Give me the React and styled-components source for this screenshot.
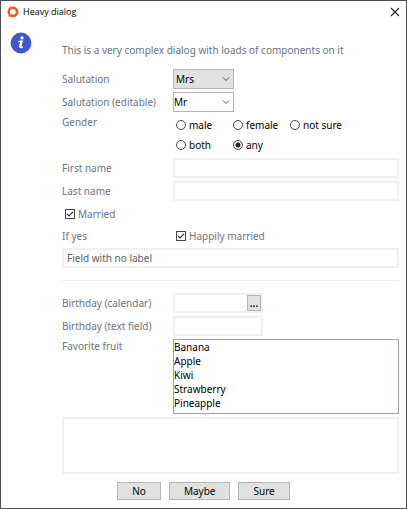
import React from "react";
import styled, { createGlobalStyle } from "styled-components";

const GlobalStyle = createGlobalStyle`
  * { box-sizing: border-box; }
  body { margin: 0; background: #fff; }
  body, input, button, select, textarea {
    font-family: "Noto Sans", "Open Sans", sans-serif;
    font-size: 10px;
    line-height: 14px;
  }
`;

const Dialog = styled.main`
  display: flex;
  flex-direction: column;
  min-height: 100vh;
  border: 1px solid #505052;
  background: #fff;
  color: #000;
`;

const TitleBar = styled.header`
  display: flex;
  align-items: center;
  height: 22px;
  padding: 0 6px;
`;

const Title = styled.h1`
  flex: 1;
  margin: 0 0 0 4px;
  font-family: "Open Sans", sans-serif;
  font-size: 9px;
  font-weight: 400;
  color: #000;
`;

const CloseButton = styled.button`
  display: flex;
  padding: 0;
  border: 0;
  background: none;
`;

const Body = styled.div`
  display: grid;
  grid-template-columns: 52px 1fr;
  padding: 9px 7px 0 9px;
`;

const Form = styled.form`
  display: flex;
  flex-direction: column;
  gap: 3px;
`;

const Intro = styled.p`
  margin: 7px 0 5px;
  line-height: 22px;
  color: #6c7482;
`;

const Row = styled.div`
  display: grid;
  grid-template-columns: 111px 1fr;
  align-items: ${(p) => (p.$top ? "start" : "center")};
  min-height: ${(p) => (p.$short ? 19 : 20)}px;
`;

const Label = styled.label`
  color: #6c7482;
`;

const inputBox = `
  width: 100%;
  height: 20px;
  padding: 0 3px;
  border: 2px solid #f0f0f0;
  border-radius: 0;
  outline: none;
  background: #fff;
  color: #606060;
`;

const TextInput = styled.input`
  ${inputBox}
  max-width: ${(p) => (p.$narrow ? "90px" : "none")};
`;

const ComboWrap = styled.div`
  display: flex;
  align-items: center;
  width: 61px;
  height: 20px;
  border: 1px solid #b4b4bb;
  background: ${(p) => (p.$filled ? "#e1e1e1" : "#fff")};
`;

const Select = styled.select`
  appearance: none;
  width: 100%;
  height: 18px;
  padding: 0 2px;
  border: 0;
  outline: none;
  background: transparent;
  color: #000;
`;

const ComboInput = styled.input`
  flex: 1;
  min-width: 0;
  height: 18px;
  padding: 0;
  border: 0;
  outline: none;
  background: transparent;
  color: #000;
`;

const ArrowButton = styled.button`
  display: flex;
  padding: 0 3px 0 0;
  border: 0;
  background: none;
`;

const Arrow = styled.span`
  display: flex;
  padding-right: 3px;
  pointer-events: none;
`;

const RadioGroup = styled.div`
  display: grid;
  grid-template-columns: 57px 57px 1fr;
  grid-auto-rows: 20px;
  align-items: center;
  padding-left: 3px;
`;

const Choice = styled.label`
  display: flex;
  align-items: center;
  gap: 3px;
  padding-left: ${(p) => (p.$indent ? 3 : 0)}px;
  color: ${(p) => (p.$muted ? "#6c7482" : "#000")};
  white-space: nowrap;
`;

const Radio = styled.input`
  appearance: none;
  width: 10px;
  height: 10px;
  margin: 0;
  border: 1px solid #444;
  border-radius: 50%;
  background: #fff;
  &:checked { background: radial-gradient(circle, #222 0 2px, #fff 3px); }
`;

const CheckFrame = styled.span`
  display: grid;
  width: 10px;
  height: 10px;
  > * { grid-area: 1 / 1; }
  svg { display: none; pointer-events: none; z-index: 1; }
  input:checked + svg { display: block; }
`;

const CheckInput = styled.input`
  appearance: none;
  width: 10px;
  height: 10px;
  margin: 0;
  border: 1px solid #444;
  background: #fff;
`;

const Divider = styled.hr`
  width: 100%;
  height: 1px;
  margin: 9px 0;
  border: 0;
  background: #ededed;
`;

const DateField = styled.div`
  display: flex;
  width: 90px;
  height: 20px;
  border: 2px solid #f0f0f0;
`;

const DateInput = styled.input`
  flex: 1;
  min-width: 0;
  padding: 0 3px;
  border: 0;
  outline: none;
`;

const DateButton = styled.button`
  width: 14px;
  padding: 0;
  border: 1px solid #b5b5b5;
  background: #e1e1e1;
  color: #000;
  font-weight: 600;
  line-height: 12px;
`;

const ListBox = styled.select`
  width: 100%;
  height: 75px;
  padding: 0;
  border: 1px solid #9fa1a9;
  border-radius: 0;
  outline: none;
  overflow: hidden;
  background: #fff;
  color: #000;
`;

const ListOption = styled.option`
  height: 14px;
  min-height: 14px;
  padding: 0;
  line-height: 14px;
`;

const Notes = styled.textarea`
  ${inputBox}
  display: block;
  height: 57px;
  resize: none;
`;

const Footer = styled.footer`
  display: flex;
  justify-content: center;
  gap: 8px;
  padding: 8px 0;
`;

const ActionButton = styled.button`
  height: 18px;
  padding: 0 14px;
  border: 1px solid #b5b5b8;
  background: #e1e1e1;
  color: #000;
`;

const Chevron = () => (
  <svg width="8" height="6" viewBox="0 0 8 6" fill="none" stroke="#555" strokeWidth="1">
    <path d="M1 1.5 4 4.5 7 1.5" />
  </svg>
);

const AppLogo = () => (
  <svg width="12" height="12" viewBox="0 0 12 12" fill="none" stroke="#f2561d" strokeWidth="2.5">
    <path d="M4.3 2A4.2 4.2 0 0 1 10.1 6M9.8 7.4A4.2 4.2 0 0 1 3.6 9.4M2.6 8.4A4.2 4.2 0 0 1 3.4 2.6" />
    <path d="M3 .8 4.6 3M11.6 7.2 9 6.8M1.7 10.4 3.9 8.6" strokeWidth="1.4" />
  </svg>
);

const InfoIcon = () => (
  <svg width="22" height="22" viewBox="0 0 22 22" role="img" aria-label="Information">
    <circle cx="11" cy="11" r="10.4" fill="#3f58cb" />
    <circle cx="12" cy="5.9" r="1.6" fill="#fff" />
    <path d="M8.3 9.6 12.2 9 10.5 15.2Q10.7 16.2 12.8 14.6" fill="none" stroke="#fff" strokeWidth="1.2" />
    <path d="M11.4 9.1 9.8 15.6" stroke="#fff" strokeWidth="2" />
  </svg>
);

const Checkbox = ({ children }) => (
  <Choice $muted $indent>
    <CheckFrame>
      <CheckInput type="checkbox" defaultChecked />
      <svg width="10" height="10" viewBox="0 0 10 10" fill="none" stroke="#333" strokeWidth="1.2">
        <path d="M2 5 4 7 8 2.8" />
      </svg>
    </CheckFrame>
    {children}
  </Choice>
);

const genders = ["male", "female", "not sure", "both", "any"];
const fruits = ["Banana", "Apple", "Kiwi", "Strawberry", "Pineapple"];

export default function App() {
  return (
    <>
      <GlobalStyle />
      <Dialog>
        <TitleBar>
          <AppLogo />
          <Title>Heavy dialog</Title>
          <CloseButton aria-label="Close">
            <svg width="10" height="10" viewBox="0 0 10 10" stroke="#222" strokeWidth="1.1">
              <path d="M1 1 9 9M9 1 1 9" />
            </svg>
          </CloseButton>
        </TitleBar>
        <Body>
          <InfoIcon />
          <Form onSubmit={(e) => e.preventDefault()}>
            <Intro>This is a very complex dialog with loads of components on it</Intro>
            <Row>
              <Label htmlFor="salutation">Salutation</Label>
              <ComboWrap $filled>
                <Select id="salutation" defaultValue="Mrs">
                  <option>Mr</option>
                  <option>Mrs</option>
                </Select>
                <Arrow><Chevron /></Arrow>
              </ComboWrap>
            </Row>
            <Row>
              <Label htmlFor="salutation-editable">Salutation (editable)</Label>
              <ComboWrap>
                <ComboInput id="salutation-editable" defaultValue="Mr" />
                <ArrowButton type="button" aria-label="Show salutations"><Chevron /></ArrowButton>
              </ComboWrap>
            </Row>
            <Row $top>
              <Label as="span" id="gender">Gender</Label>
              <RadioGroup role="radiogroup" aria-labelledby="gender">
                {genders.map((g) => (
                  <Choice key={g}>
                    <Radio type="radio" name="gender" value={g} defaultChecked={g === "any"} />
                    {g}
                  </Choice>
                ))}
              </RadioGroup>
            </Row>
            <Row>
              <Label htmlFor="first">First name</Label>
              <TextInput id="first" />
            </Row>
            <Row>
              <Label htmlFor="last">Last name</Label>
              <TextInput id="last" />
            </Row>
            <Row $short>
              <Checkbox>Married</Checkbox>
            </Row>
            <Row $short>
              <Label as="span">If yes</Label>
              <Checkbox>Happily married</Checkbox>
            </Row>
            <TextInput aria-label="Field with no label" defaultValue="Field with no label" />
            <Divider />
            <Row>
              <Label htmlFor="birthday-calendar">Birthday (calendar)</Label>
              <DateField>
                <DateInput id="birthday-calendar" />
                <DateButton type="button" aria-label="Open calendar">...</DateButton>
              </DateField>
            </Row>
            <Row $short>
              <Label htmlFor="birthday-text">Birthday (text field)</Label>
              <TextInput $narrow id="birthday-text" />
            </Row>
            <Row $top>
              <Label htmlFor="fruit">Favorite fruit</Label>
              <ListBox id="fruit" multiple size={5}>
                {fruits.map((f) => (
                  <ListOption key={f}>{f}</ListOption>
                ))}
              </ListBox>
            </Row>
            <Notes aria-label="Notes" />
          </Form>
        </Body>
        <Footer>
          <ActionButton type="button">No</ActionButton>
          <ActionButton type="button">Maybe</ActionButton>
          <ActionButton type="button">Sure</ActionButton>
        </Footer>
      </Dialog>
    </>
  );
}
